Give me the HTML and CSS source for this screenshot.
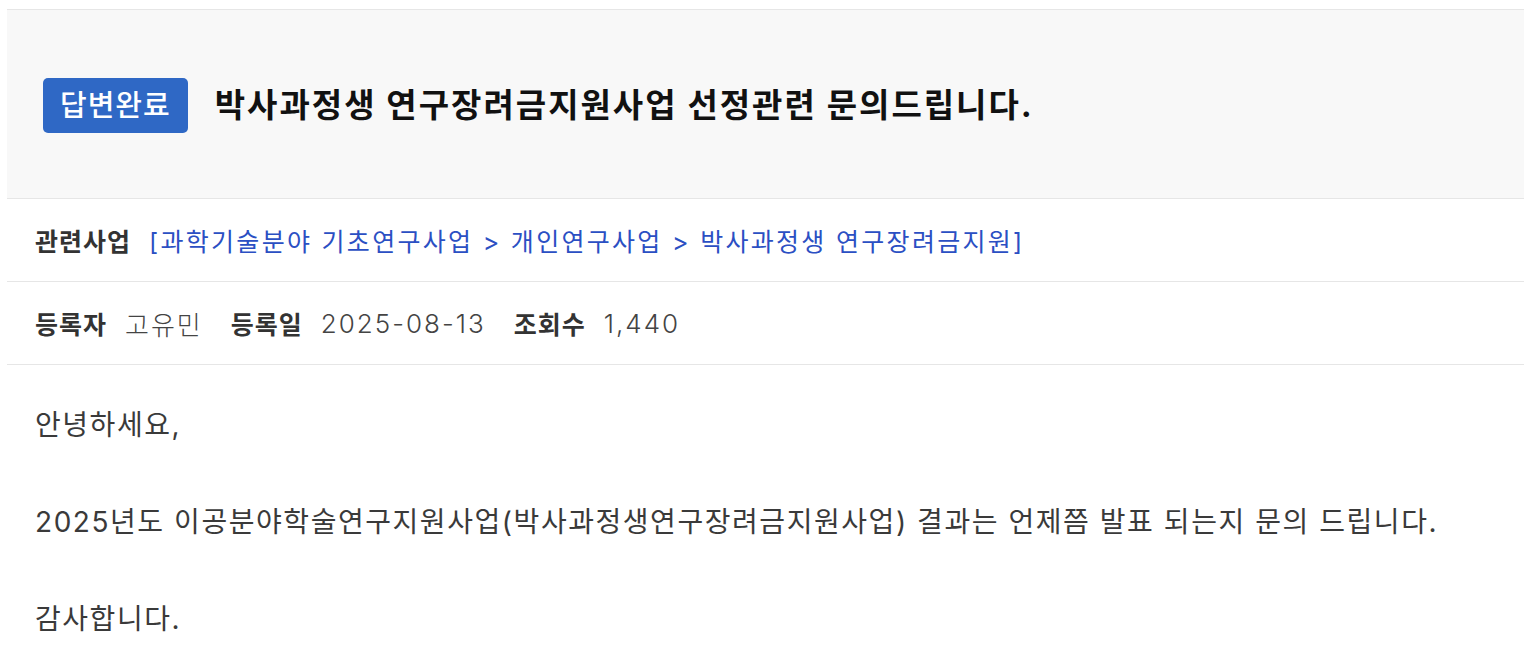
FILE: index.html
```html
<!DOCTYPE html>
<html lang="ko">
  <head>
    <meta charset="UTF-8" />
    <meta name="viewport" content="width=device-width, initial-scale=1.0" />
    <title>Q&amp;A 상세</title>
    <link rel="stylesheet" href="styles.css">
  </head>
  <body>
    <div class="board-view">
      <div class="view-head">
        <span class="badge done">답변완료</span>
        <h2 class="view-title">박사과정생 연구장려금지원사업 선정관련 문의드립니다.</h2>
      </div>

      <div class="view-row">
        <strong class="label">관련사업</strong>
        <a class="biz-link" href="#">[과학기술분야 기초연구사업 &gt; 개인연구사업 &gt; 박사과정생 연구장려금지원]</a>
      </div>

      <div class="view-row">
        <strong class="label">등록자</strong>
        <span class="value">고유민</span>
        <strong class="label">등록일</strong>
        <span class="value">2025-08-13</span>
        <strong class="label">조회수</strong>
        <span class="value">1,440</span>
      </div>

      <div class="view-body">
        <p>안녕하세요,</p>
        <p>2025년도 이공분야학술연구지원사업(박사과정생연구장려금지원사업) 결과는 언제쯤 발표 되는지 문의 드립니다.</p>
        <p>감사합니다.</p>
      </div>
    </div>
  </body>
</html>
```

FILE: styles.css
```css
body {
  font-family: Inter, "Noto Sans CJK KR", sans-serif;
  margin: 0;
  padding: 9px 0 0 7px;
  background-color: #fff;
  color: #333;
  overflow: hidden;
}
.board-view {
  border-top: 1px solid #e6e6e6;
}
.view-head {
  display: flex;
  align-items: center;
  gap: 27px;
  height: 188px;
  padding: 0 36px;
  background-color: #f8f8f8;
  border-bottom: 1px solid #e6e6e6;
}
.badge {
  display: inline-block;
  padding: 0 17px;
  height: 55px;
  line-height: 55px;
  margin-top: 2px;
  border-radius: 5px;
  font-size: 29px;
  font-weight: 500;
  letter-spacing: 1px;
  color: white;
}
.done {
  background-color: #2f68c5;
}
.view-title {
  margin: 0 0 2px;
  font-size: 33px;
  font-weight: 700;
  letter-spacing: 2px;
  color: #111;
}
.view-row {
  display: flex;
  align-items: center;
  height: 82px;
  padding: 0 28px;
  border-bottom: 1px solid #e6e6e6;
  font-size: 25px;
}
.label {
  font-weight: 700;
  color: #333;
  letter-spacing: 1px;
  margin-right: 18px;
}
.value {
  font-size: 26px;
  font-weight: 300;
  color: #444;
  letter-spacing: 2px;
  margin-right: 28px;
}
.biz-link {
  color: #2b4fc3;
  letter-spacing: 2.3px;
  text-decoration: none;
}
.view-body {
  padding: 36px 28px 0;
  font-size: 28px;
  color: #3a3a3a;
}
.view-body p {
  margin: 0 0 49px;
  line-height: 48px;
  letter-spacing: 1.55px;
}
```
